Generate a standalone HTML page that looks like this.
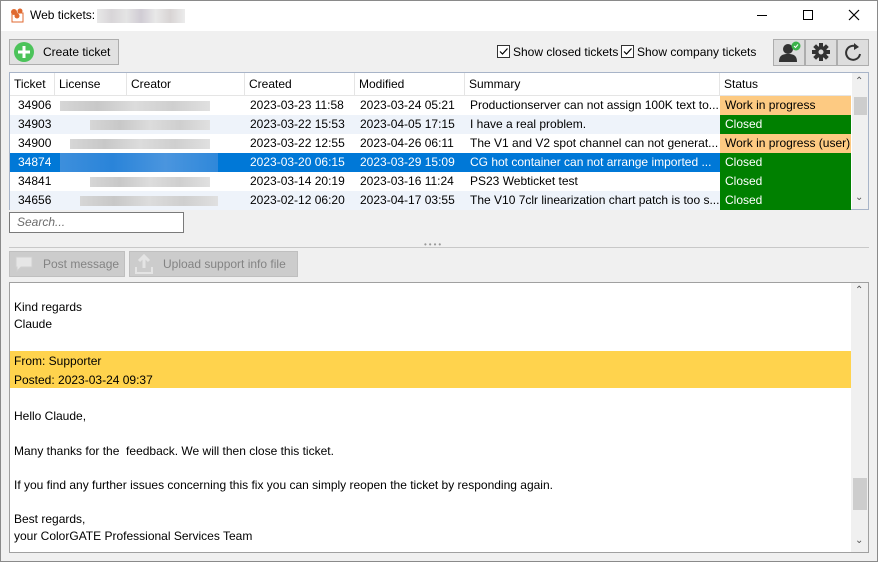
<!DOCTYPE html>
<html><head><style>
*{box-sizing:border-box;margin:0;padding:0}
body{width:878px;height:562px;overflow:hidden;background:#f0f0f0;font-family:"Liberation Sans",sans-serif;font-size:12px;color:#000;position:relative}
.abs{position:absolute}
.win{position:absolute;left:0;top:0;width:878px;height:562px;border:1px solid #8a8a8a}
.title{left:1px;top:1px;width:876px;height:30px;background:#fff}
.btn{background:#e1e1e1;border:1px solid #adadad}
.row{position:absolute;left:10px;width:841px;height:19px}
.c{position:absolute;top:0;height:19px;line-height:19px;white-space:nowrap;overflow:hidden}
.blur{position:absolute;top:5px;height:10px;background:linear-gradient(90deg,#d6d6d6,#c8c8c8,#dcdcdc,#cfcfcf,#e0e0e0)}
.hd{position:absolute;top:0;height:23px;line-height:23px;padding-left:4px;border-right:1px solid #e5e5e5}
.msg{position:absolute;left:14px;font-size:12px}
</style></head><body>
<div class="win"></div>
<div class="abs title"></div>
<svg class="abs" style="left:9px;top:7px" width="16" height="16"><rect x="3" y="6" width="11" height="9" fill="#fff" stroke="#e06a30"/><circle cx="5" cy="5" r="3" fill="#e06a30"/><circle cx="11" cy="4" r="2.5" fill="#e06a30"/><circle cx="8" cy="9" r="2.5" fill="#e06a30"/></svg>
<div class="abs" style="left:30px;top:8px;font-size:12px">Web tickets:</div>
<div class="abs" style="left:97px;top:9px;width:88px;height:14px;background:linear-gradient(90deg,#e8e8e8,#d8d5d8,#e4e4e4,#d0ccd4,#e8e8e8,#d8d4d4,#ececec)"></div>
<div class="abs" style="left:757px;top:15px;width:10px;height:1px;background:#000"></div>
<div class="abs" style="left:803px;top:10px;width:10px;height:10px;border:1px solid #000"></div>
<svg class="abs" style="left:848px;top:9px" width="12" height="12"><path d="M1 1L11 11M11 1L1 11" stroke="#000" stroke-width="1.2"/></svg>

<div class="abs btn" style="left:9px;top:39px;width:110px;height:26px"></div>
<svg class="abs" style="left:13px;top:41px" width="22" height="22"><circle cx="11" cy="11" r="10" fill="#4cc35a"/><path d="M11 5v12M5 11h12" stroke="#fff" stroke-width="3"/></svg>
<div class="abs" style="left:43px;top:45px">Create ticket</div>

<div class="abs" style="left:497px;top:45px;width:13px;height:13px;border:1px solid #333;background:#fff"></div>
<svg class="abs" style="left:498px;top:46px" width="11" height="11"><path d="M2 5.5l2.5 2.5 5-5.5" stroke="#000" fill="none" stroke-width="1.2"/></svg>
<div class="abs" style="left:513px;top:45px">Show closed tickets</div>
<div class="abs" style="left:621px;top:45px;width:13px;height:13px;border:1px solid #333;background:#fff"></div>
<svg class="abs" style="left:622px;top:46px" width="11" height="11"><path d="M2 5.5l2.5 2.5 5-5.5" stroke="#000" fill="none" stroke-width="1.2"/></svg>
<div class="abs" style="left:637px;top:45px">Show company tickets</div>

<div class="abs btn" style="left:773px;top:39px;width:32px;height:27px;background:#ddd"></div>
<div class="abs btn" style="left:805px;top:39px;width:32px;height:27px;background:#ddd"></div>
<div class="abs btn" style="left:837px;top:39px;width:32px;height:27px;background:#ddd"></div>
<svg class="abs" style="left:778px;top:41px" width="24" height="22"><circle cx="10" cy="8" r="5" fill="#333"/><path d="M1 21c0-7 4-8 9-8s9 1 9 8z" fill="#333"/><circle cx="18" cy="5" r="4.5" fill="#3cb34a"/><path d="M16 5l1.5 1.5 2.5-3" stroke="#fff" fill="none"/></svg>
<svg class="abs" style="left:811px;top:42px" width="20" height="20"><g fill="#333" transform="translate(10 10)"><circle r="6"/><rect x="-2" y="-9" width="4" height="18"/><rect x="-2" y="-9" width="4" height="18" transform="rotate(45)"/><rect x="-2" y="-9" width="4" height="18" transform="rotate(90)"/><rect x="-2" y="-9" width="4" height="18" transform="rotate(135)"/><circle r="2.5" fill="#ddd"/></g></svg>
<svg class="abs" style="left:843px;top:42px" width="20" height="20"><path d="M14 5A7 7 0 1 0 17 12" stroke="#333" stroke-width="2" fill="none"/><path d="M11 1l5 4-5 3z" fill="#333"/></svg>

<!-- table -->
<div class="abs" style="left:9px;top:72px;width:860px;height:138px;background:#fff;border:1px solid #a8b4c8"></div>
<div class="abs" style="left:10px;top:73px;width:841px;height:23px;background:#fff;border-bottom:1px solid #e5e5e5">
<div class="hd" style="left:0;width:45px">Ticket</div>
<div class="hd" style="left:45px;width:72px">License</div>
<div class="hd" style="left:117px;width:118px">Creator</div>
<div class="hd" style="left:235px;width:110px">Created</div>
<div class="hd" style="left:345px;width:110px">Modified</div>
<div class="hd" style="left:455px;width:255px">Summary</div>
<div class="hd" style="left:710px;width:131px;border:none">Status</div>
</div>
<div class="abs" style="left:852px;top:73px;width:16px;height:136px;background:#f0f0f0"></div>
<div class="abs" style="left:855px;top:76px;font-size:10px;color:#555">&#8963;</div>
<div class="abs" style="left:854px;top:97px;width:13px;height:18px;background:#cdcdcd"></div>
<div class="abs" style="left:855px;top:192px;font-size:10px;color:#555">&#8964;</div>

<div class="row" style="top:96px;background:#fff"><div class="c" style="left:8px">34906</div><div class="blur" style="left:50px;width:150px"></div><div class="c" style="left:240px">2023-03-23 11:58</div><div class="c" style="left:350px">2023-03-24 05:21</div><div class="c" style="left:460px">Productionserver can not assign 100K text to...</div><div class="c" style="left:710px;width:131px;background:#fdca82;padding-left:5px">Work in progress</div></div>
<div class="row" style="top:115px;background:#eef3fa"><div class="c" style="left:8px">34903</div><div class="blur" style="left:80px;width:120px"></div><div class="c" style="left:240px">2023-03-22 15:53</div><div class="c" style="left:350px">2023-04-05 17:15</div><div class="c" style="left:460px">I have a real problem.</div><div class="c" style="left:710px;width:131px;background:#008000;color:#fff;padding-left:5px">Closed</div></div>
<div class="row" style="top:134px;background:#fff"><div class="c" style="left:8px">34900</div><div class="blur" style="left:60px;width:140px"></div><div class="c" style="left:240px">2023-03-22 12:55</div><div class="c" style="left:350px">2023-04-26 06:11</div><div class="c" style="left:460px">The V1 and V2 spot channel can not generat...</div><div class="c" style="left:710px;width:131px;background:#fdca82;padding-left:5px">Work in progress (user)</div></div>
<div class="row" style="top:153px;background:#0078d7;color:#fff"><div class="c" style="left:8px">34874</div><div class="blur" style="left:50px;width:158px;top:0;height:19px;background:linear-gradient(90deg,#3d8fdc,#2a84d9,#4a95de,#2f88da)"></div><div class="c" style="left:240px">2023-03-20 06:15</div><div class="c" style="left:350px">2023-03-29 15:09</div><div class="c" style="left:460px">CG hot container can not arrange imported ...</div><div class="c" style="left:710px;width:131px;background:#008000;color:#fff;padding-left:5px">Closed</div></div>
<div class="row" style="top:172px;background:#fff"><div class="c" style="left:8px">34841</div><div class="blur" style="left:80px;width:120px"></div><div class="c" style="left:240px">2023-03-14 20:19</div><div class="c" style="left:350px">2023-03-16 11:24</div><div class="c" style="left:460px">PS23 Webticket test</div><div class="c" style="left:710px;width:131px;background:#008000;color:#fff;padding-left:5px">Closed</div></div>
<div class="row" style="top:191px;background:#eef3fa"><div class="c" style="left:8px">34656</div><div class="blur" style="left:70px;width:138px"></div><div class="c" style="left:240px">2023-02-12 06:20</div><div class="c" style="left:350px">2023-04-17 03:55</div><div class="c" style="left:460px">The V10 7clr linearization chart patch is too s...</div><div class="c" style="left:710px;width:131px;background:#008000;color:#fff;padding-left:5px">Closed</div></div>

<div class="abs" style="left:9px;top:212px;width:175px;height:21px;background:#fff;border:1px solid #7a7a7a"></div>
<div class="abs" style="left:17px;top:215px;font-style:italic;color:#6d6d6d">Search...</div>
<div class="abs" style="left:424px;top:240px;font-size:8px;color:#999;letter-spacing:2px">••••</div>
<div class="abs" style="left:9px;top:247px;width:860px;height:1px;background:#c8c8c8"></div>

<div class="abs" style="left:9px;top:251px;width:116px;height:26px;background:#ccc;border:1px solid #bfbfbf"></div>
<svg class="abs" style="left:14px;top:254px" width="20" height="20"><path d="M2 3h16v10H7l-4 4v-4H2z" fill="#e6e6e6" stroke="#d0d0d0"/></svg>
<div class="abs" style="left:43px;top:257px;color:#838383">Post message</div>
<div class="abs" style="left:129px;top:251px;width:169px;height:26px;background:#ccc;border:1px solid #bfbfbf"></div>
<svg class="abs" style="left:134px;top:253px" width="20" height="22"><path d="M10 3v12M5 8l5-5 5 5" stroke="#e4e4e4" stroke-width="3" fill="none"/><path d="M2 14v6h16v-6" stroke="#e4e4e4" stroke-width="2" fill="none"/></svg>
<div class="abs" style="left:163px;top:257px;color:#838383">Upload support info file</div>

<div class="abs" style="left:9px;top:282px;width:860px;height:271px;background:#fff;border:1px solid #a0a0a0"></div>
<div class="abs" style="left:851px;top:283px;width:17px;height:269px;background:#f0f0f0"></div>
<div class="abs" style="left:855px;top:285px;font-size:10px;color:#555">&#8963;</div>
<div class="abs" style="left:853px;top:478px;width:14px;height:32px;background:#cdcdcd"></div>
<div class="abs" style="left:855px;top:535px;font-size:10px;color:#555">&#8964;</div>
<div class="abs" style="left:10px;top:351px;width:841px;height:37px;background:#ffd34d"></div>
<div class="msg" style="top:300px">Kind regards</div>
<div class="msg" style="top:317px">Claude</div>
<div class="msg" style="top:354px">From: Supporter</div>
<div class="msg" style="top:373px">Posted: 2023-03-24 09:37</div>
<div class="msg" style="top:409px">Hello Claude,</div>
<div class="msg" style="top:444px">Many thanks for the&nbsp; feedback. We will then close this ticket.</div>
<div class="msg" style="top:478px">If you find any further issues concerning this fix you can simply reopen the ticket by responding again.</div>
<div class="msg" style="top:512px">Best regards,</div>
<div class="msg" style="top:529px">your ColorGATE Professional Services Team</div>
</body></html>
